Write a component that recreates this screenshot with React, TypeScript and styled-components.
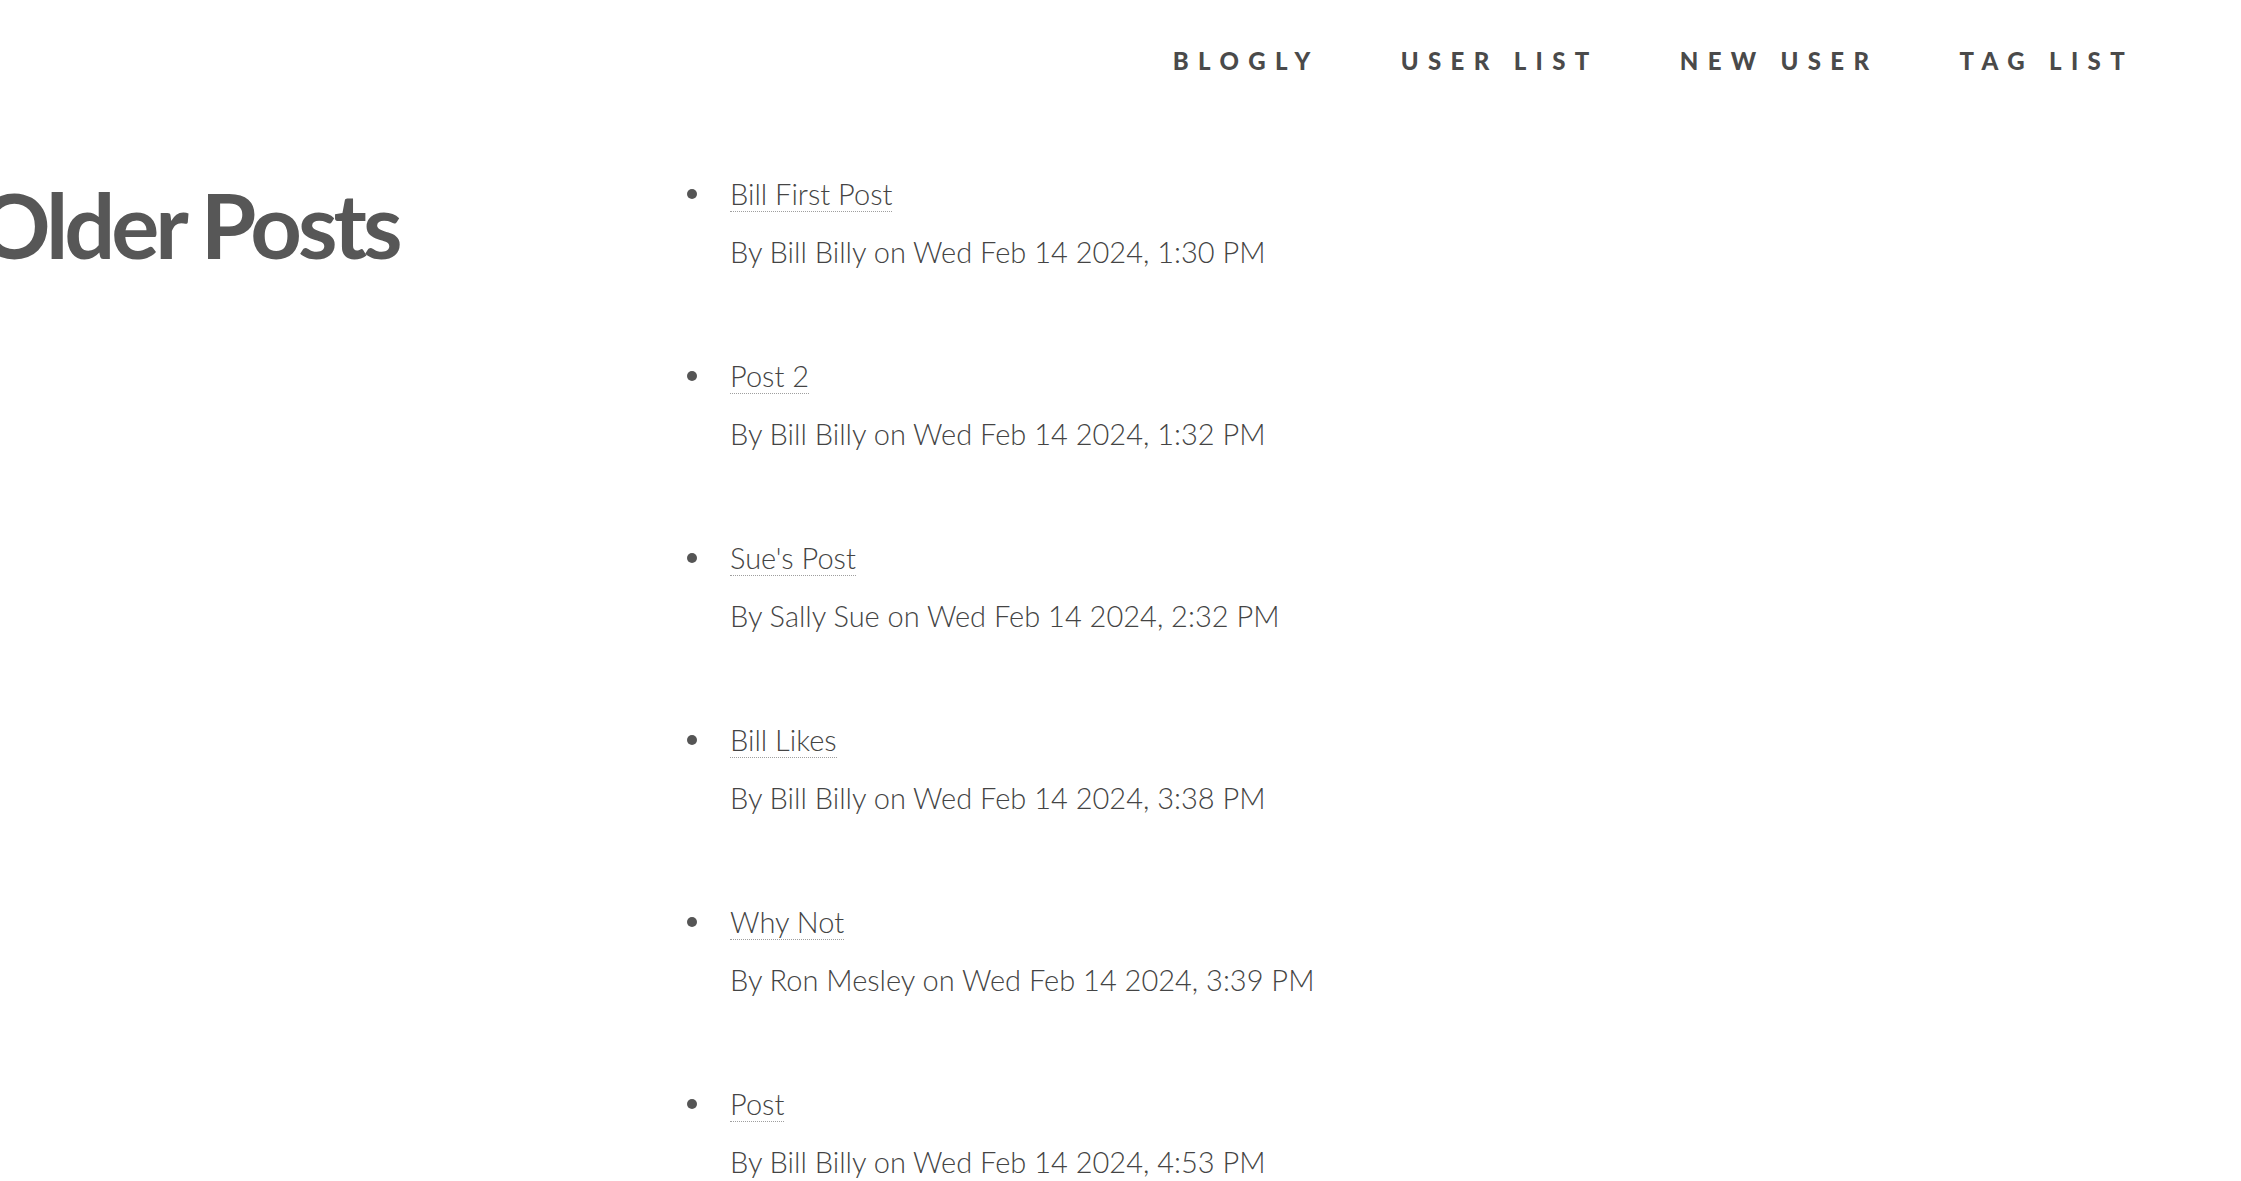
import React from "react";
import styled, { createGlobalStyle } from "styled-components";

const Global = createGlobalStyle`
  html, body { margin: 0; padding: 0; background: #ffffff; }
  body { font-family: "Lato", "Noto Sans", sans-serif; color: #585858; overflow: hidden; }
  * { box-sizing: border-box; }
`;

const Page = styled.div`
  width: 2241px;
  height: 1181px;
  overflow: hidden;
  display: flex;
  flex-direction: column;
`;

const Nav = styled.nav`
  flex: 0 0 120px;
  display: flex;
  justify-content: flex-end;
  align-items: center;
  padding-right: 107px;
  gap: 81px;
`;

const NavLink = styled.a`
  font-family: "Lato", sans-serif;
  font-weight: 900;
  font-size: 24px;
  letter-spacing: 0.39em;
  text-transform: uppercase;
  color: #4a4a4a;
  text-decoration: none;
`;

const Main = styled.div`
  flex: 0 0 auto;
  display: grid;
  grid-template-columns: 692px 1fr;
  align-items: start;
`;

const Heading = styled.h1`
  margin: 59px 0 0 -22px;
  font-family: "Lato", sans-serif;
  font-weight: 700;
  font-size: 90px;
  line-height: 1;
  letter-spacing: -0.045em;
  color: #575757;
  white-space: nowrap;
`;

const List = styled.ul`
  margin: 50px 0 0 0;
  padding: 0;
  list-style: none;
  display: flex;
  flex-direction: column;
  gap: 76px;
`;

const Item = styled.li`
  position: relative;
  padding-left: 38px;
  font-size: 29px;
  font-weight: 300;
  color: #444444;
  &::before {
    content: "";
    position: absolute;
    left: -5px;
    top: 19px;
    width: 10px;
    height: 10px;
    border-radius: 50%;
    background: #555555;
  }
`;

const Title = styled.div`
  line-height: 48px;
`;

const TitleLink = styled.a`
  color: #444444;
  text-decoration: none;
  border-bottom: 1px dotted rgba(80, 80, 80, 0.55);
`;

const Meta = styled.p`
  margin: 10px 0 0 0;
  line-height: 48px;
  color: #444444;
`;

const posts = [
  { title: "Bill First Post", meta: "By Bill Billy on Wed Feb 14 2024, 1:30 PM" },
  { title: "Post 2", meta: "By Bill Billy on Wed Feb 14 2024, 1:32 PM" },
  { title: "Sue's Post", meta: "By Sally Sue on Wed Feb 14 2024, 2:32 PM" },
  { title: "Bill Likes", meta: "By Bill Billy on Wed Feb 14 2024, 3:38 PM" },
  { title: "Why Not", meta: "By Ron Mesley on Wed Feb 14 2024, 3:39 PM" },
  { title: "Post", meta: "By Bill Billy on Wed Feb 14 2024, 4:53 PM" },
];

export default function App() {
  return (
    <Page>
      <Global />
      <Nav>
        <NavLink href="#">Blogly</NavLink>
        <NavLink href="#">User List</NavLink>
        <NavLink href="#">New User</NavLink>
        <NavLink href="#">Tag List</NavLink>
      </Nav>
      <Main>
        <Heading>Older Posts</Heading>
        <List>
          {posts.map((p) => (
            <Item key={p.title}>
              <Title>
                <TitleLink href="#">{p.title}</TitleLink>
              </Title>
              <Meta>{p.meta}</Meta>
            </Item>
          ))}
        </List>
      </Main>
    </Page>
  );
}
